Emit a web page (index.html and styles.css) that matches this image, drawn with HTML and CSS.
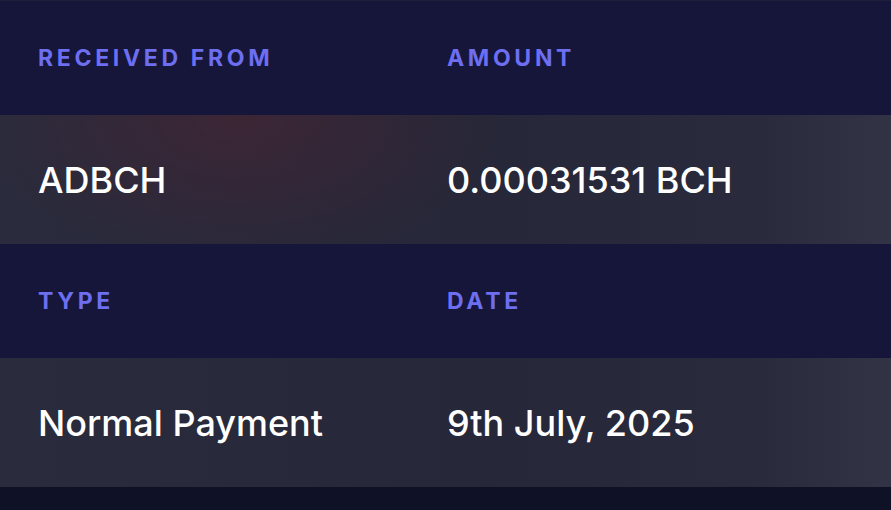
FILE: index.html
```html
<!DOCTYPE html>
<html lang="en">
<head>
<meta charset="utf-8">
<title>Transaction details</title>
<link rel="stylesheet" href="styles.css">
</head>
<body>
<div class="details">
  <div class="row head">
    <div class="cell">Received From</div>
    <div class="cell">Amount</div>
  </div>
  <div class="row data glow">
    <div class="cell">ADBCH</div>
    <div class="cell">0.00031531 BCH</div>
  </div>
  <div class="row head">
    <div class="cell">Type</div>
    <div class="cell">Date</div>
  </div>
  <div class="row data">
    <div class="cell">Normal Payment</div>
    <div class="cell">9th July, 2025</div>
  </div>
</div>
</body>
</html>
```
FILE: styles.css
```css
html, body {
  margin: 0;
  padding: 0;
  background: #0f1126;
  height: 100%;
}
body {
  font-family: Inter, "Noto Sans", sans-serif;
  overflow: hidden;
}
.details {
  border-top: 1px solid #201f38;
  display: flex;
  flex-direction: column;
}
.row {
  display: grid;
  grid-template-columns: 409px 1fr;
  align-items: center;
  padding-left: 38px;
}
.head {
  height: 114px;
  background: #15163a;
  color: #6d6ef0;
  font-size: 23px;
  font-weight: 700;
  letter-spacing: 0.16em;
  text-transform: uppercase;
}
.data {
  height: 129px;
  color: #ffffff;
  font-size: 36px;
  font-weight: 500;
  background: linear-gradient(90deg, #2a2b3c 0%, #262738 55%, #292a3b 85%, #323344 100%);
}
.glow {
  background:
    radial-gradient(ellipse 260px 150px at 240px 0px, rgba(80, 34, 48, 0.5), rgba(80, 34, 48, 0) 100%),
    linear-gradient(90deg, #2a2b3c 0%, #262738 55%, #292a3b 85%, #323344 100%);
}
```
